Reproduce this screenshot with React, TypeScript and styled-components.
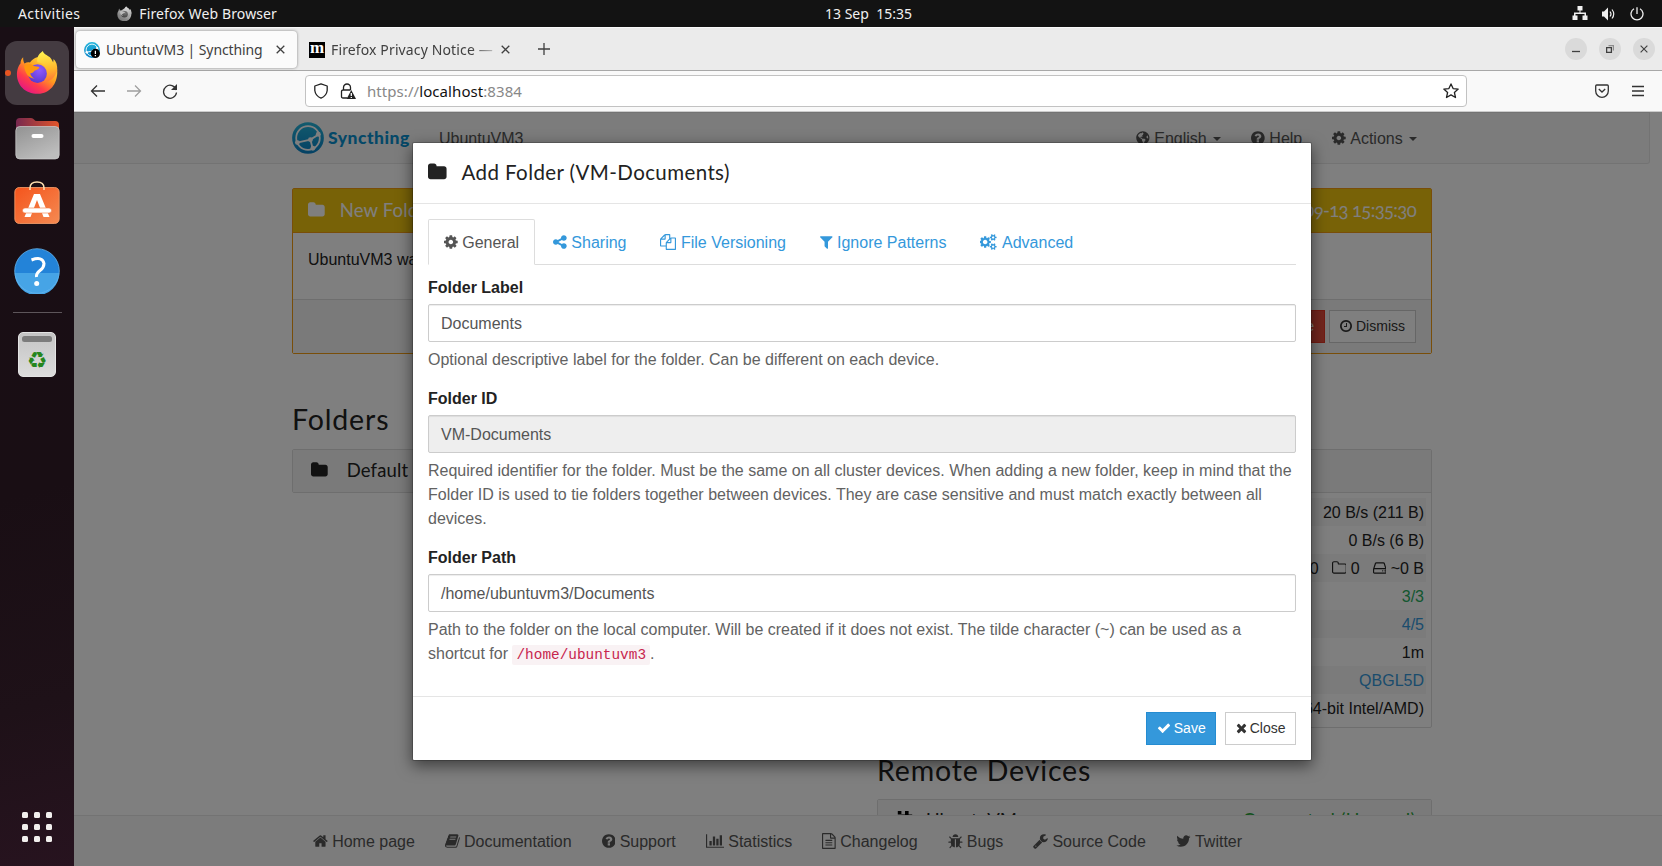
import React from "react";
import styled, { createGlobalStyle, css } from "styled-components";
import { FaGlobeAmericas } from "react-icons/fa";

const GlobalStyle = createGlobalStyle`
  * { box-sizing: border-box; }
  html, body { margin: 0; height: 866px; overflow: hidden; }
  body { font: 16px/24px "Liberation Sans", Arial, sans-serif; color: #222; }
`;

const ubuntu = `"Noto Sans", "Open Sans", sans-serif`;
const raleway = `Lato, "Open Sans", sans-serif`;

/* ---------- icon set ---------- */

type Glyph = { x: number; w: number; d: string };

const glyphs: Record<string, Glyph> = {
  cog: { x: 128, w: 1536, d: "M1152 896q0-106-75-181t-181-75-181 75-75 181 75 181 181 75 181-75 75-181zm512-109v222q0 12-8 23t-20 13l-185 28q-19 54-39 91 35 50 107 138 10 12 10 25t-9 23q-27 37-99 108t-94 71q-12 0-26-9l-138-108q-44 23-91 38-16 136-29 186-7 28-36 28h-222q-14 0-24.5-8.5t-11.5-21.5l-28-184q-49-16-90-37l-141 107q-10 9-25 9-14 0-25-11-126-114-165-168-7-10-7-23 0-12 8-23 15-21 51-66.5t54-70.5q-27-50-41-99l-183-27q-13-2-21-12.5t-8-23.5v-222q0-12 8-23t19-13l186-28q14-46 39-92-40-57-107-138-10-12-10-24 0-10 9-23 26-36 98.5-107.5t94.5-71.5q13 0 26 10l138 107q44-23 91-38 16-136 29-186 7-28 36-28h222q14 0 24.5 8.5t11.5 21.5l28 184q49 16 90 37l142-107q9-9 24-9 13 0 25 10 129 119 165 170 7 8 7 22 0 12-8 23-15 21-51 66.5t-54 70.5q26 50 41 98l183 28q13 2 21 12.5t8 23.5z" },
  share: { x: 128, w: 1536, d: "M1344 1024q133 0 226.5 93.5t93.5 226.5-93.5 226.5-226.5 93.5-226.5-93.5-93.5-226.5q0-12 2-34l-360-180q-92 86-218 86-133 0-226.5-93.5t-93.5-226.5 93.5-226.5 226.5-93.5q126 0 218 86l360-180q-2-22-2-34 0-133 93.5-226.5t226.5-93.5 226.5 93.5 93.5 226.5-93.5 226.5-226.5 93.5q-126 0-218-86l-360 180q2 22 2 34t-2 34l360 180q92-86 218-86z" },
  files: { x: 0, w: 1792, d: "M1696 384q40 0 68 28t28 68v1216q0 40-28 68t-68 28h-960q-40 0-68-28t-28-68v-288h-544q-40 0-68-28t-28-68v-672q0-40 20-88t48-76l408-408q28-28 76-48t88-20h416q40 0 68 28t28 68v328q68-40 128-40h416zm-544 213l-299 299h299v-299zm-640-384l-299 299h299v-299zm196 647l316-316v-416h-384v416q0 40-28 68t-68 28h-416v640h512v-256q0-40 20-88t48-76zm956 804v-1152h-384v416q0 40-28 68t-68 28h-416v640h896z" },
  filter: { x: 192, w: 1408, d: "M1595 295q17 41-14 70l-493 493v742q0 42-39 59-13 5-25 5-27 0-45-19l-256-256q-19-19-19-45v-486l-493-493q-31-29-14-70 17-39 59-39h1280q42 0 59 39z" },
  cogs: { x: 0, w: 1920, d: "M832 896q0-106-75-181t-181-75-181 75-75 181 75 181 181 75 181-75 75-181zm768 512q0-52-38-90t-90-38-90 38-38 90q0 53 37.5 90.5t90.5 37.5 90.5-37.5 37.5-90.5zm0-1024q0-52-38-90t-90-38-90 38-38 90q0 53 37.5 90.5t90.5 37.5 90.5-37.5 37.5-90.5zm-384 421v185q0 10-7 19.5t-16 10.5l-155 24q-11 35-32 76 34 48 90 115 7 11 7 20 0 12-7 19-23 30-82.5 89.5t-78.5 59.5q-11 0-21-7l-115-90q-37 19-77 31-11 108-23 155-7 24-30 24h-186q-11 0-20-7.5t-10-17.5l-23-153q-34-10-75-31l-118 89q-7 7-20 7-11 0-21-8-144-133-144-160 0-9 7-19 10-14 41-53t47-61q-23-44-35-82l-152-24q-10-1-17-9.5t-7-19.5v-185q0-10 7-19.5t16-10.5l155-24q11-35 32-76-34-48-90-115-7-11-7-20 0-12 7-20 22-30 82-89t79-59q11 0 21 7l115 90q34-18 77-32 11-108 23-154 7-24 30-24h186q11 0 20 7.5t10 17.5l23 153q34 10 75 31l118-89q8-7 20-7 11 0 21 8 144 133 144 160 0 8-7 19-12 16-42 54t-45 60q23 48 34 82l152 23q10 2 17 10.5t7 19.5zm640 533v140q0 16-149 31-12 27-30 52 51 113 51 138 0 4-4 7-122 71-124 71-8 0-46-47t-52-68q-20 2-30 2t-30-2q-14 21-52 68t-46 47q-2 0-124-71-4-3-4-7 0-25 51-138-18-25-30-52-149-15-149-31v-140q0-16 149-31 13-29 30-52-51-113-51-138 0-4 4-7 4-2 35-20t59-34 30-16q8 0 46 46.5t52 67.5q20-2 30-2t30 2q51-71 92-112l6-2q4 0 124 70 4 3 4 7 0 25-51 138 17 23 30 52 149 15 149 31zm0-1024v140q0 16-149 31-12 27-30 52 51 113 51 138 0 4-4 7-122 71-124 71-8 0-46-47t-52-68q-20 2-30 2t-30-2q-14 21-52 68t-46 47q-2 0-124-71-4-3-4-7 0-25 51-138-18-25-30-52-149-15-149-31v-140q0-16 149-31 13-29 30-52-51-113-51-138 0-4 4-7 4-2 35-20t59-34 30-16q8 0 46 46.5t52 67.5q20-2 30-2t30 2q51-71 92-112l6-2q4 0 124 70 4 3 4 7 0 25-51 138 17 23 30 52 149 15 149 31z" },
  folder: { x: 64, w: 1664, d: "M1728 608v704q0 92-66 158t-158 66h-1216q-92 0-158-66t-66-158v-960q0-92 66-158t158-66h320q92 0 158 66t66 158v32h672q92 0 158 66t66 158z" },
  folderO: { x: 0, w: 1664, d: "M1536 1312v-704q0-40-28-68t-68-28h-704q-40 0-68-28t-28-68v-64q0-40-28-68t-68-28h-320q-40 0-68 28t-28 68v960q0 40 28 68t68 28h1216q40 0 68-28t28-68zm128-704v704q0 92-66 158t-158 66h-1216q-92 0-158-66t-66-158v-960q0-92 66-158t158-66h320q92 0 158 66t66 158v32h672q92 0 158 66t66 158z" },
  help: { x: 128, w: 1536, d: "M1024 1376v-192q0-14-9-23t-23-9h-192q-14 0-23 9t-9 23v192q0 14 9 23t23 9h192q14 0 23-9t9-23zm256-672q0-88-55.5-163t-138.5-116-170-41q-243 0-371 213-15 24 8 42l132 100q7 6 19 6 16 0 25-12 53-68 86-92 34-24 86-24 48 0 85.5 26t37.5 59q0 38-20 61t-68 45q-63 28-115.5 86.5t-52.5 125.5v36q0 14 9 23t23 9h192q14 0 23-9t9-23q0-19 21.5-49.5t54.5-49.5q32-18 49-28.5t46-35 44.5-48 28-60.5 12.5-81zm384 192q0 209-103 385.5t-279.5 279.5-385.5 103-385.5-103-279.5-279.5-103-385.5 103-385.5 279.5-279.5 385.5-103 385.5 103 279.5 279.5 103 385.5z" },
  home: { x: 64, w: 1664, d: "M1472 992v480q0 26-19 45t-45 19h-384v-384h-256v384h-384q-26 0-45-19t-19-45v-480q0-1 .5-3t.5-3l575-474 575 474q1 2 1 6zm223-69l-62 74q-8 9-21 11h-3q-13 0-21-7l-692-577-692 577q-12 8-24 7-13-2-21-11l-62-74q-8-10-7-23.5t11-21.5l719-599q32-26 76-26t76 26l244 204v-195q0-14 9-23t23-9h192q14 0 23 9t9 23v408l219 182q10 8 11 21.5t-7 23.5z" },
  book: { x: 64, w: 1664, d: "M1703 478q40 57 18 129l-275 906q-19 64-76.5 107.5t-122.5 43.5h-923q-77 0-148.5-53.5t-99.5-131.5q-24-67-2-127 0-4 3-27t4-37q1-8-3-21.5t-3-19.5q2-11 8-21t16.5-23.5 16.5-23.5q23-38 45-91.5t30-91.5q3-10 .5-30t-.5-28q3-11 17-28t17-23q21-36 42-92t25-90q1-9-2.5-32t.5-28q4-13 22-30.5t22-22.5q19-26 42.5-84.5t27.5-96.5q1-8-3-25.5t-2-26.5q2-8 9-18t18-23 17-21q8-12 16.5-30.5t15-35 16-36 19.5-32 26.5-23.5 36-11.5 47.5 5.5l-1 3q38-9 51-9h761q74 0 114 56t18 130l-274 906q-36 119-71.5 153.5t-128.5 34.5h-869q-27 0-38 15-11 16-1 43 24 70 144 70h923q29 0 56-15.5t35-41.5l300-987q7-22 5-57 38 15 59 43zm-1064 2q-4 13 2 22.5t20 9.5h608q13 0 25.5-9.5t16.5-22.5l21-64q4-13-2-22.5t-20-9.5h-608q-13 0-25.5 9.5t-16.5 22.5zm-83 256q-4 13 2 22.5t20 9.5h608q13 0 25.5-9.5t16.5-22.5l21-64q4-13-2-22.5t-20-9.5h-608q-13 0-25.5 9.5t-16.5 22.5z" },
  chart: { x: 0, w: 2048, d: "M640 896v512h-256v-512h256zm384-512v1024h-256v-1024h256zm1024 1152v128h-2048v-1536h128v1408h1920zm-640-896v768h-256v-768h256zm384-384v1152h-256v-1152h256z" },
  fileText: { x: 128, w: 1536, d: "M1596 380q28 28 48 76t20 88v1152q0 40-28 68t-68 28h-1344q-40 0-68-28t-28-68v-1600q0-40 28-68t68-28h896q40 0 88 20t76 48zm-444-244v376h376q-10-29-22-41l-313-313q-12-12-41-22zm384 1528v-1024h-416q-40 0-68-28t-28-68v-416h-768v1536h1280zm-1024-864q0-14 9-23t23-9h704q14 0 23 9t9 23v64q0 14-9 23t-23 9h-704q-14 0-23-9t-9-23v-64zm736 224q14 0 23 9t9 23v64q0 14-9 23t-23 9h-704q-14 0-23-9t-9-23v-64q0-14 9-23t23-9h704zm0 256q14 0 23 9t9 23v64q0 14-9 23t-23 9h-704q-14 0-23-9t-9-23v-64q0-14 9-23t23-9h704z" },
  bug: { x: 0, w: 1664, d: "M1632 1024q0 26-19 45t-45 19h-224q0 171-67 290l208 209q19 19 19 45t-19 45q-18 19-45 19t-45-19l-198-197q-5 5-15 13t-42 28.5-65 36.5-82 29-97 13v-896h-128v896q-51 0-101.5-13.5t-87-33-66-39-43.5-32.5l-15-14-183 207q-20 21-48 21-24 0-43-16-19-18-20.5-44.5t15.5-46.5l202-227q-58-114-58-274h-224q-26 0-45-19t-19-45 19-45 45-19h224v-294l-173-173q-19-19-19-45t19-45 45-19 45 19l173 173h844l173-173q19-19 45-19t45 19 19 45-19 45l-173 173v294h224q26 0 45 19t19 45zm-480-576h-640q0-133 93.5-226.5t226.5-93.5 226.5 93.5 93.5 226.5z" },
  wrench: { x: 64, w: 1664, d: "M448 1472q0-26-19-45t-45-19-45 19-19 45 19 45 45 19 45-19 19-45zm644-420l-682 682q-37 37-90 37-52 0-91-37l-106-108q-38-36-38-90 0-53 38-91l681-681q39 98 114.5 173.5t173.5 114.5zm634-435q0 39-23 106-47 134-164.5 217.5t-258.5 83.5q-185 0-316.5-131.5t-131.5-316.5 131.5-316.5 316.5-131.5q58 0 121.5 16.5t107.5 46.5q16 11 16 28t-16 28l-293 169v224l193 107q5-3 79-48.5t135.5-81 70.5-35.5q15 0 23.5 10t8.5 25z" },
  twitter: { x: 64, w: 1664, d: "M1684 408q-67 98-162 167 1 14 1 42 0 130-38 259.5t-115.5 248.5-184.5 210.5-258 146-323 54.5q-271 0-496-145 35 4 78 4 225 0 401-138-105-2-188-64.5t-114-159.5q33 5 61 5 43 0 85-11-112-23-185.5-111.5t-73.5-205.5v-4q68 38 146 41-66-44-105-115t-39-154q0-88 44-163 121 149 294.5 238.5t371.5 99.5q-8-38-8-74 0-134 94.5-228.5t228.5-94.5q140 0 236 102 109-21 205-78-37 115-142 178 93-10 186-50z" },
  check: { x: 0, w: 1792, d: "M1671 566q0 40-28 68l-724 724-136 136q-28 28-68 28t-68-28l-136-136-362-362q-28-28-28-68t28-68l136-136q28-28 68-28t68 28l294 295 656-657q28-28 68-28t68 28l136 136q28 28 28 68z" },
  times: { x: 192, w: 1408, d: "M1490 1322q0 40-28 68l-136 136q-28 28-68 28t-68-28l-294-294-294 294q-28 28-68 28t-68-28l-136-136q-28-28-28-68t28-68l294-294-294-294q-28-28-28-68t28-68l136-136q28-28 68-28t68 28l294 294 294-294q28-28 68-28t68 28l136 136q28 28 28 68t-28 68l-294 294 294 294q28 28 28 68z" },
  clock: { x: 128, w: 1536, d: "M1024 544v448q0 14-9 23t-23 9h-320q-14 0-23-9t-9-23v-64q0-14 9-23t23-9h224v-352q0-14 9-23t23-9h64q14 0 23 9t9 23zm416 352q0-148-73-273t-198-198-273-73-273 73-198 198-73 273 73 273 198 198 273 73 273-73 198-198 73-273zm224 0q0 209-103 385.5t-279.5 279.5-385.5 103-385.5-103-279.5-279.5-103-385.5 103-385.5 279.5-279.5 385.5-103 385.5 103 279.5 279.5 103 385.5z" },
  hdd: { x: 0, w: 1536, d: "M1168 1216a80 80 0 1 1-160 0a80 80 0 0 1 160 0zm256 0a80 80 0 1 1-160 0a80 80 0 0 1 160 0zM128 1056v320q0 32 32 32h1216q32 0 32-32v-320q0-32-32-32h-1216q-32 0-32 32zM178 896h1180l-157-482q-8-30-40-30h-786q-32 0-40 30zM1536 1056v320q0 66-47 113t-113 47h-1216q-66 0-113-47t-47-113v-320q0-42 22-102l197-606q21-62 62-77t94-15h786q52 0 100 35t64 84l197 606q14 53 14 95z" },
};

const Svg = styled.svg`
  display: block;
  flex: none;
  fill: currentColor;
`;

function Icon({ name, size = 16 }: { name: string; size?: number }) {
  const g = glyphs[name];
  return (
    <Svg
      width={(g.w / 1792) * size}
      height={size}
      viewBox={`${g.x} 0 ${g.w} 1792`}
      fillRule={name === "hdd" ? "evenodd" : "nonzero"}
    >
      <path d={g.d} />
    </Svg>
  );
}

const Line = styled.svg`
  display: block;
  flex: none;
  fill: none;
  stroke: currentColor;
  stroke-width: 1.3;
`;

/* ---------- desktop shell ---------- */

const Desktop = styled.div`
  width: 1662px;
  height: 866px;
  display: flex;
  flex-direction: column;
  overflow: hidden;
`;

const TopBar = styled.header`
  height: 27px;
  flex: none;
  display: grid;
  grid-template-columns: 1fr auto 1fr;
  align-items: center;
  padding: 0 18px;
  background: #131313;
  color: #f0f0f0;
  font: 14px/27px ${ubuntu};
`;

const BarGroup = styled.div<{ $end?: boolean }>`
  display: flex;
  align-items: center;
  justify-content: ${(p) => (p.$end ? "flex-end" : "flex-start")};
  gap: ${(p) => (p.$end ? "13px" : "7px")};
`;

const BarText = styled.span<{ $gap?: number; $track?: number }>`
  margin-right: ${(p) => p.$gap ?? 0}px;
  letter-spacing: ${(p) => p.$track ?? 0}px;
  white-space: pre;
`;

/* The clock is centred over the area to the right of the dock. */
const Clock = styled(BarText)`
  margin-left: 75px;
`;

const Workspace = styled.div`
  flex: 1;
  display: flex;
  min-height: 0;
`;

const Dock = styled.nav`
  width: 74px;
  flex: none;
  display: flex;
  flex-direction: column;
  align-items: center;
  padding: 14px 0 24px;
  background: linear-gradient(165deg, #190e15 0%, #190e14 55%, #1e1118 80%, #27131f 100%);
`;

const DockTile = styled.div<{ $active?: boolean; $h?: number; $mt?: number }>`
  position: relative;
  width: 64px;
  height: ${(p) => p.$h ?? 64}px;
  margin-top: ${(p) => p.$mt ?? 0}px;
  padding-bottom: ${(p) => (p.$active ? 2 : 0)}px;
  display: flex;
  align-items: center;
  justify-content: center;
  border-radius: 12px;
  background: ${(p) => (p.$active ? "#443b41" : "transparent")};
`;

const RunningDot = styled.i`
  position: absolute;
  left: 0;
  top: 29px;
  width: 6px;
  height: 6px;
  border-radius: 50%;
  background: #e95420;
`;

const DockRule = styled.hr`
  width: 49px;
  height: 1px;
  margin: 18px 0 0;
  border: 0;
  background: #5d555a;
`;

const AppGrid = styled.div`
  margin-top: auto;
  display: grid;
  grid-template-columns: repeat(3, 6px);
  gap: 6px;
`;

const AppDot = styled.i`
  width: 6px;
  height: 6px;
  border-radius: 1.5px;
  background: #f2f0ee;
`;

/* ---------- browser ---------- */

const Browser = styled.main`
  flex: 1;
  min-width: 0;
  display: flex;
  flex-direction: column;
  font-family: ${ubuntu};
`;

const TabStrip = styled.div`
  height: 44px;
  flex: none;
  display: flex;
  align-items: center;
  padding: 0 7px 0 2px;
  background: #ebebeb;
  border-bottom: 1px solid #a8a8a8;
  border-top: 1px solid #f8f8f8;
  color: #404040;
`;

const Tab = styled.div<{ $active?: boolean }>`
  width: ${(p) => (p.$active ? 221 : 225)}px;
  height: 37px;
  margin-top: 1px;
  display: flex;
  align-items: center;
  padding: 0 12px 0 ${(p) => (p.$active ? 8 : 12)}px;
  border-radius: 4px;
  font-size: 14px;
  white-space: nowrap;
  ${(p) =>
    p.$active &&
    css`
      background: #fbfbfb;
      box-shadow: 0 0 3px rgba(0, 0, 0, 0.45);
    `}
`;

const TabTitle = styled.span<{ $track: number; $fade?: boolean }>`
  flex: 1;
  margin-left: 6px;
  overflow: hidden;
  letter-spacing: ${(p) => p.$track}px;
  ${(p) =>
    p.$fade &&
    css`
      mask-image: linear-gradient(90deg, #000 82%, transparent 101%);
    `}
`;

const NewTab = styled.div`
  margin-left: 16px;
`;

const WindowButtons = styled.div`
  margin-left: auto;
  display: flex;
  gap: 12px;
`;

const WindowButton = styled.div`
  width: 22px;
  height: 22px;
  border-radius: 50%;
  display: flex;
  align-items: center;
  justify-content: center;
  background: #dadada;
`;

const Toolbar = styled.div`
  height: 41px;
  flex: none;
  display: flex;
  align-items: center;
  padding: 0 16px;
  background: #f9f9f9;
  border-bottom: 1px solid #ccc;
  color: #333;
`;

const NavButtons = styled.div`
  width: 215px;
  display: flex;
  gap: 20px;
`;

const AddressBar = styled.div`
  width: 1162px;
  height: 32px;
  display: flex;
  align-items: center;
  gap: 11px;
  padding: 0 7px 0 7px;
  border: 1px solid #c2c2c2;
  border-radius: 4px;
  background: #fff;
  font-size: 15px;
  color: #888;
`;

const AddressText = styled.span`
  flex: 1;
  letter-spacing: 0.07px;

  b {
    font-weight: 400;
    color: #111;
  }
`;

const ToolbarEnd = styled.div`
  margin-left: auto;
  display: flex;
  gap: 20px;
`;

/* ---------- page ---------- */

const Viewport = styled.div`
  position: relative;
  flex: 1;
  min-height: 0;
  display: flex;
  flex-direction: column;
  overflow: hidden;
  background: #fff;
  font-family: "Liberation Sans", Arial, sans-serif;
`;

const Navbar = styled.div`
  width: 1576px;
  height: 52px;
  flex: none;
  display: flex;
  align-items: center;
  padding: 1px 232px 0 218px;
  background: #f8f8f8;
  border: 1px solid #e7e7e7;
  border-left: 0;
  border-radius: 0 0 3px 0;
  color: #555;
`;

const Brand = styled.div`
  display: flex;
  align-items: center;
  gap: 4px;
  width: 147px;
  padding-bottom: 2px;
  font: 900 17.5px/24px ${raleway};
  letter-spacing: 0.5px;
  color: #0891d1;
`;

const NavLinks = styled.div`
  margin-left: auto;
  display: flex;
  gap: 30px;
`;

const IconText = styled.span<{ $gap?: number; $color?: string }>`
  height: 24px;
  display: inline-flex;
  align-items: center;
  gap: ${(p) => p.$gap ?? 4.3}px;
  white-space: nowrap;
  color: ${(p) => p.$color ?? "inherit"};

  svg {
    margin-bottom: 2px;
  }
`;

const Caret = styled.i`
  margin-left: 2px;
  border-top: 4px solid;
  border-left: 4px solid transparent;
  border-right: 4px solid transparent;
`;

const Content = styled.div`
  flex: 1;
  min-height: 0;
  overflow: hidden;
  width: 1576px;
  padding: 24px 218px 0;
`;

const Panel = styled.section<{ $warning?: boolean }>`
  border: 1px solid ${(p) => (p.$warning ? "#f39c12" : "#ddd")};
  border-radius: 2px;
  background: #fff;
`;

const PanelHeading = styled.div<{ $warning?: boolean; $plain?: boolean; $gap?: number }>`
  height: ${(p) => (p.$warning ? 44 : p.$plain ? 42 : 43)}px;
  display: flex;
  align-items: center;
  gap: ${(p) => p.$gap ?? (p.$warning ? 15 : 19)}px;
  padding: 0 15px 2px ${(p) => (p.$warning ? 15 : 18)}px;
  background: ${(p) => (p.$warning ? "#f1c40f" : "#f5f5f5")};
  border-bottom: ${(p) => (p.$plain ? 0 : 1)}px solid ${(p) => (p.$warning ? "#f39c12" : "#ddd")};
  color: ${(p) => (p.$warning ? "#fff" : "#222")};
  font: 18.5px/24px ${raleway};
  font-feature-settings: "onum";
  letter-spacing: 0.15px;
`;

const HeadingEnd = styled.span<{ $color?: string; $track: number }>`
  margin-left: auto;
  color: ${(p) => p.$color ?? "inherit"};
  letter-spacing: ${(p) => p.$track}px;
`;

const NoticeBody = styled.p`
  height: 66px;
  margin: 0;
  padding: 15px 15px 0;
`;

const NoticeFooter = styled.div`
  height: 54px;
  display: flex;
  align-items: center;
  justify-content: flex-end;
  gap: 4px;
  padding: 0 15px;
  background: #f5f5f5;
  border-top: 1px solid #ddd;
`;

const Button = styled.button<{ $kind?: "primary" | "danger"; $tight?: boolean }>`
  height: 33px;
  display: inline-flex;
  align-items: center;
  gap: ${(p) => (p.$tight ? 3 : 4)}px;
  padding: 0 ${(p) => (p.$tight ? 9.5 : 10)}px;
  border: 1px solid #ccc;
  background: #fff;
  color: #333;
  font: 14px/21px "Liberation Sans", Arial, sans-serif;

  svg {
    margin-bottom: 1px;
  }
  ${(p) =>
    p.$kind === "primary" &&
    css`
      border-color: #258cd1;
      background: #3498db;
      color: #fff;
    `}
  ${(p) =>
    p.$kind === "danger" &&
    css`
      border-color: #e43725;
      background: #e74c3c;
      color: #fff;
    `}
`;

const Columns = styled.div`
  display: grid;
  grid-template-columns: 555px 555px;
  gap: 30px;
  margin-top: 48px;
`;

const Heading = styled.h3<{ $height?: number }>`
  margin: 0;
  height: ${(p) => p.$height ?? 47}px;
  font: 400 28.5px/34px ${raleway};
  letter-spacing: 0.85px;
`;

const Stats = styled.div`
  padding: 5px;
`;

const StatRow = styled.div<{ $color?: string }>`
  height: 28px;
  display: flex;
  align-items: center;
  justify-content: flex-end;
  gap: 13px;
  padding: 2px 2px 0;
  color: ${(p) => p.$color ?? "#222"};
  &:nth-child(odd) {
    background: #f6f6f6;
  }
`;

const RemoteDevices = styled.div`
  margin-top: 25px;
`;

const Identicon = styled.svg`
  width: 18px;
  height: 18px;
  flex: none;
`;

const PageFooter = styled.footer`
  height: 51px;
  flex: none;
  display: flex;
  gap: 30px;
  padding: 14px 239px 0;
  background: #f8f8f8;
  border-top: 1px solid #e7e7e7;
  color: #555;
`;

const Backdrop = styled.div`
  position: absolute;
  inset: 0;
  background: rgba(0, 0, 0, 0.5);
`;

/* ---------- dialog ---------- */

const Dialog = styled.section`
  position: absolute;
  left: 338px;
  top: 30px;
  width: 900px;
  height: 619px;
  border: 1px solid rgba(0, 0, 0, 0.2);
  border-radius: 2px;
  background: #fff;
  background-clip: padding-box;
  box-shadow: 0 5px 15px rgba(0, 0, 0, 0.5);
`;

const DialogHeader = styled.header`
  height: 61px;
  display: flex;
  align-items: center;
  gap: 15px;
  padding: 0 15px 2px;
  border-bottom: 1px solid #e5e5e5;
  font: 20.5px/30px ${raleway};
  letter-spacing: 0.4px;
`;

const DialogBody = styled.div`
  height: 492px;
  padding: 15px 15px 0;
`;

const Tabs = styled.div`
  height: 46px;
  display: flex;
  gap: 2px;
  border-bottom: 1px solid #ddd;
`;

const TabLink = styled.div<{ $active?: boolean }>`
  height: 46px;
  padding: 11px 15px 9px;
  border: 1px solid transparent;
  color: #3498db;
  ${(p) =>
    p.$active &&
    css`
      border-color: #ddd #ddd transparent;
      border-radius: 2px 2px 0 0;
      background: #fff;
      color: #555;
    `}
`;

const Field = styled.div`
  padding-top: 11px;
  & + & {
    padding-top: 15px;
  }
`;

const Label = styled.label`
  display: block;
  margin-bottom: 4px;
  font-weight: 700;
`;

const Input = styled.div<{ $disabled?: boolean }>`
  height: 38px;
  padding: 7px 12px 5px;
  border: 1px solid #ccc;
  border-radius: 2px;
  background: ${(p) => (p.$disabled ? "#eee" : "#fff")};
  box-shadow: inset 0 1px 1px rgba(0, 0, 0, 0.075);
  color: #555;
`;

const HelpText = styled.p`
  margin: 6px 0 0;
  color: #626262;
`;

const Code = styled.code`
  padding: 2px 4px;
  border-radius: 2px;
  background: #f9f2f4;
  color: #c7254e;
  font: 14.4px "Liberation Mono", monospace;
`;

const DialogFooter = styled.footer`
  height: 64px;
  display: flex;
  align-items: center;
  justify-content: flex-end;
  gap: 9px;
  padding: 0 15px;
  border-top: 1px solid #e5e5e5;
`;

/* ---------- drawings ---------- */

function FirefoxLogo({ size, mono }: { size: number; mono?: boolean }) {
  const id = mono ? "m" : "c";
  return (
    <svg width={size} height={size * 1.04} viewBox="0 0 48 50">
      <defs>
        <linearGradient id={`${id}a`} x1="0.85" y1="0.1" x2="0.2" y2="0.95">
          <stop offset="0" stopColor={mono ? "#ddd" : "#ffe141"} />
          <stop offset="0.4" stopColor={mono ? "#aaa" : "#ff9a1f"} />
          <stop offset="0.7" stopColor={mono ? "#888" : "#ff3b4b"} />
          <stop offset="1" stopColor={mono ? "#777" : "#e31587"} />
        </linearGradient>
        <radialGradient id={`${id}b`} cx="0.6" cy="0.3" r="0.7">
          <stop offset="0" stopColor={mono ? "#777" : "#9059ff"} />
          <stop offset="1" stopColor={mono ? "#444" : "#5b3ad0"} />
        </radialGradient>
        <linearGradient id={`${id}c`} x1="0.5" y1="0" x2="0.6" y2="1">
          <stop offset="0" stopColor={mono ? "#ddd" : "#fff44f"} />
          <stop offset="0.6" stopColor={mono ? "#bbb" : "#ffb52c"} />
          <stop offset="1" stopColor={mono ? "#999" : "#ff7139"} />
        </linearGradient>
      </defs>
      <path fill={`url(#${id}a)`} d="M8 8c-.2 3 .3 5 1.500 7 2-1.200 4-1.500 6-1 2-3 5-5 8-6 3 0 10 1 14 6 2 1 5 3 6 7l2-2c3 14-5 30-21 30C10 49 1 39 1 27c0-5 2-10 4-12 0-3 1-5 3-7z" />
      <path fill={`url(#${id}c)`} d="M30 1c-6 4-7 9-6 13 4 0 9 3 11 8 1 6-1 11-5 14 8 0 14-5 16-13 .5-6-1-10-4-13l-.5 4c-2-5-4-6-7-8-3-2-4-3-4.500-5z" />
      <circle cx="24" cy="26.500" r="10.500" fill={`url(#${id}b)`} />
      <path fill={mono ? "#bbb" : "#ff980e"} d="M9 18c4-3 8-3 11 0l6 1c0 2-2 3-5 4-1 1-2 3-5 3 0 2 2 5 5 6-7 0-11-6-12-14z" />
    </svg>
  );
}

function SyncthingLogo({ size, id, alert }: { size: number; id: string; alert?: boolean }) {
  return (
    <Svg width={size} height={size} viewBox="0 0 118 118">
      <defs>
        <linearGradient id={id} x1="0" y1="1" x2="0" y2="0">
          <stop offset="0" stopColor="#0882c8" />
          <stop offset="1" stopColor="#26b6db" />
        </linearGradient>
      </defs>
      <circle cx="59" cy="59" r="58.500" fill={`url(#${id})`} />
      <g fill="none" stroke="#fff" strokeWidth="6.500">
        <circle cx="59" cy="59" r="43.500" />
        <path d="M68 65L98 46M68 65L76 98M68 65L19 76" strokeWidth="7" />
      </g>
      <g fill="#fff">
        <circle cx="68" cy="65" r="9" />
        <circle cx="97" cy="45" r="9" />
        <circle cx="77" cy="97" r="9" />
        <circle cx="20" cy="76" r="9" />
      </g>
      {alert && (
        <g>
          <circle cx="84" cy="84" r="34" fill="#000" />
          <path d="M84 64v24M84 96v9" stroke="#fff" strokeWidth="9" />
        </g>
      )}
    </Svg>
  );
}

function Cross({ size = 9 }: { size?: number }) {
  return (
    <Line width={size} height={size} viewBox="0 0 9 9">
      <path d="M.7.7l7.600 7.600M8.300.7L.7 8.300" />
    </Line>
  );
}

function FilesLogo() {
  return (
    <svg width="45" height="42" viewBox="0 0 45 42">
      <defs>
        <linearGradient id="fb" x1="0" x2="1"><stop offset="0" stopColor="#77284f" /><stop offset="1" stopColor="#e2552a" /></linearGradient>
        <linearGradient id="ff" x1="0" x2="0.6" y2="1"><stop offset="0" stopColor="#929292" /><stop offset="1" stopColor="#bdbdbd" /></linearGradient>
      </defs>
      <path fill="url(#fb)" d="M1 4q0-4 4-4h11q2 0 3 1.500T22 3h18q4 0 4 4v12H1z" />
      <rect x=".8" y="8.500" width="43.400" height="32.500" rx="4" fill="url(#ff)" stroke="#cfcfcf" strokeWidth=".7" />
      <rect x="16.500" y="16" width="12" height="4" rx="2" fill="#fff" />
    </svg>
  );
}

function SoftwareLogo() {
  return (
    <svg width="46" height="43" viewBox="0 0 46 43">
      <defs><linearGradient id="sw" x1="0" x2="1" y2="1"><stop offset="0" stopColor="#f4541c" /><stop offset="1" stopColor="#f58a52" /></linearGradient></defs>
      <rect x=".8" y="6.500" width="44.400" height="36" rx="4.500" fill="url(#sw)" stroke="#f9a06c" strokeWidth=".8" />
      <path d="M16 9V7q0-6 7-6t7 6v2" fill="none" stroke="#ffe0b0" strokeWidth="1.500" />
      <path d="M20 13h6l9.500 23h-6L23 19l-6.500 17h-6z" fill="#fff" />
      <rect x="8.500" y="27" width="29" height="5" rx="2.500" fill="#fff" stroke="#f2753e" strokeWidth=".6" />
    </svg>
  );
}

function HelpLogo() {
  return (
    <svg width="46" height="46" viewBox="0 0 46 46">
      <circle cx="23" cy="23" r="22.300" fill="#2383d8" />
      <path d="M.7 25h44.600a22.300 22.300 0 0 1-44.600 0z" fill="#46a4e6" />
      <circle cx="23" cy="23" r="22.300" fill="none" stroke="#63b4ee" strokeWidth=".8" />
      <path d="M17.500 12q11-4 12.500 3.500 0 4-4 7t-3.500 6.500" fill="none" stroke="#fff" strokeWidth="3" />
      <circle cx="22.700" cy="35.500" r="2.500" fill="#fff" />
    </svg>
  );
}

const RecycleMark = styled.span`
  font: 23px/22px "DejaVu Sans", sans-serif;
  color: #25861d;
`;

const TrashBody = styled.div`
  width: 38px;
  height: 45px;
  display: flex;
  flex-direction: column;
  align-items: center;
  gap: 7px;
  padding-top: 3px;
  border-radius: 5px;
  background: linear-gradient(#c4c4c4, #dcdcdc);
  border: 1px solid #e3e3e3;
`;

const TrashLid = styled.i`
  width: 30px;
  height: 6px;
  flex: none;
  border-radius: 2.5px;
  background: #7c7c7c;
`;

const MozillaMark = styled.span`
  width: 16px;
  height: 16px;
  flex: none;
  background: #000;
  color: #fff;
  text-align: center;
  font: 700 17px/11px "Liberation Serif", serif;
`;

function GnomeBar() {
  return (
    <TopBar>
      <BarGroup>
        <BarText $gap={30} $track={0.4}>Activities</BarText>
        <FirefoxLogo size={15} mono />
        <BarText $track={0.12}>Firefox Web Browser</BarText>
      </BarGroup>
      <Clock>{"13 Sep  15:35"}</Clock>
      <BarGroup $end>
        <Svg width="16" height="15" viewBox="0 0 16 15">
          <path d="M5.500 0h5v4.500h-2v2h5.500v3h1.500V14h-5V9.500h2v-1.500h-9v1.500h2V14H.5V9.500H2v-3h5.500v-2h-2z" />
        </Svg>
        <Svg width="16" height="14" viewBox="0 0 16 14">
          <path d="M1 4.500h2L7 .5v13l-4-4H1z" />
          <path d="M9 4.500q2 2.500 0 5M11 2.500q3.500 4.500 0 9" fill="none" stroke="currentColor" strokeWidth="1.200" />
        </Svg>
        <Line width="14" height="14" viewBox="0 0 14 14">
          <path d="M4 1.700a6 6 0 1 0 6 0M7 .3v6.700" />
        </Line>
      </BarGroup>
    </TopBar>
  );
}

function SideDock() {
  return (
    <Dock>
      <DockTile $active>
        <RunningDot />
        <FirefoxLogo size={43} />
      </DockTile>
      <DockTile $h={42} $mt={13}><FilesLogo /></DockTile>
      <DockTile $h={43} $mt={21}><SoftwareLogo /></DockTile>
      <DockTile $h={46} $mt={24}><HelpLogo /></DockTile>
      <DockRule />
      <DockTile $h={45} $mt={19}>
        <TrashBody><TrashLid /><RecycleMark>♻</RecycleMark></TrashBody>
      </DockTile>
      <AppGrid>{Array.from({ length: 9 }, (_, i) => <AppDot key={i} />)}</AppGrid>
    </Dock>
  );
}

function BrowserTabs() {
  return (
    <TabStrip>
      <Tab $active>
        <SyncthingLogo size={16} id="fav" alert />
        <TabTitle $track={-0.1}>UbuntuVM3 | Syncthing</TabTitle>
        <Cross />
      </Tab>
      <Tab>
        <MozillaMark>m</MozillaMark>
        <TabTitle $track={0.13} $fade>Firefox Privacy Notice —</TabTitle>
        <Cross />
      </Tab>
      <NewTab>
        <Line width="12" height="12" viewBox="0 0 12 12"><path d="M6 0v12M0 6h12" /></Line>
      </NewTab>
      <WindowButtons>
        <WindowButton><Line width="8" height="8" viewBox="0 0 8 8"><path d="M0 6.500h8" /></Line></WindowButton>
        <WindowButton>
          <Line width="8" height="8" viewBox="0 0 8 8">
            <path d="M.6 2.600h4.800v4.800H.6z" /><path d="M2.500.5h5v5" opacity=".5" />
          </Line>
        </WindowButton>
        <WindowButton><Cross size={8} /></WindowButton>
      </WindowButtons>
    </TabStrip>
  );
}

function BrowserToolbar() {
  return (
    <Toolbar>
      <NavButtons>
        <Line width="16" height="16" viewBox="0 0 16 16"><path d="M15 8H1.500M7 2.500L1.500 8 7 13.500" /></Line>
        <Line width="16" height="16" viewBox="0 0 16 16" opacity=".45"><path d="M1 8h13.500M9 2.500L14.500 8 9 13.500" /></Line>
        <Line width="16" height="16" viewBox="0 0 16 16">
          <path d="M14.300 7a6.500 6.500 0 1 0 .2 2.500" /><path d="M15 1v6H9z" fill="currentColor" stroke="none" />
        </Line>
      </NavButtons>
      <AddressBar>
        <Line width="16" height="16" viewBox="0 0 16 16" color="#222">
          <path d="M8 .8l6.200 2.200v4.500Q13.500 13 8 15.200 2.500 13 1.800 7.500V3z" strokeLinejoin="round" />
        </Line>
        <Line width="16" height="16" viewBox="0 0 16 16" color="#222">
          <path d="M3.500 7V4.500a3.500 3.500 0 0 1 7 0V7M7.500 15H3q-1.500 0-1.500-1.500V8.500Q1.500 7 3 7h7.500" />
          <path d="M11.300 7l4.700 9H6.600z" fill="currentColor" stroke="none" />
          <path d="M11.300 10v3M11.300 14v1" stroke="#fff" />
        </Line>
        <AddressText>https://<b>localhost</b>:8384</AddressText>
        <Line width="16" height="16" viewBox="0 0 16 16" color="#222">
          <path d="M8 .9l2.100 4.700 5.100.5-3.800 3.400 1.100 5L8 11.900l-4.500 2.600 1.100-5L.8 6.100l5.100-.5z" strokeLinejoin="round" />
        </Line>
      </AddressBar>
      <ToolbarEnd>
        <Line width="16" height="16" viewBox="0 0 16 16">
          <path d="M1.700 3q0-1 1-1h10.600q1 0 1 1v5a6.300 6.300 0 0 1-12.600 0z" /><path d="M4.800 6L8 9l3.200-3" />
        </Line>
        <Line width="16" height="16" viewBox="0 0 16 16"><path d="M2 3.500h12M2 8h12M2 12.500h12" /></Line>
      </ToolbarEnd>
    </Toolbar>
  );
}

const footerLinks = [
  ["home", "Home page"],
  ["book", "Documentation"],
  ["help", "Support"],
  ["chart", "Statistics"],
  ["fileText", "Changelog"],
  ["bug", "Bugs"],
  ["wrench", "Source Code"],
  ["twitter", "Twitter"],
];

function Dashboard() {
  return (
    <>
      <Navbar>
        <Brand><SyncthingLogo size={32} id="brand" />Syncthing</Brand>
        <span>UbuntuVM3</span>
        <NavLinks>
          <IconText $gap={4.6}><FaGlobeAmericas size={13.7} />English<Caret /></IconText>
          <IconText><Icon name="help" />Help</IconText>
          <IconText><Icon name="cog" />Actions<Caret /></IconText>
        </NavLinks>
      </Navbar>
      <Content>
        <Panel $warning>
          <PanelHeading $warning>
            <Icon name="folder" size={18} />New Folder<HeadingEnd $track={-0.65}>2022-09-13 15:35:30</HeadingEnd>
          </PanelHeading>
          <NoticeBody>UbuntuVM3 wants to share folder "Documents" (VM-Documents). Add new folder?</NoticeBody>
          <NoticeFooter>
            <Button $kind="danger">Ignore</Button>
            <Button><Icon name="clock" size={14} />Dismiss</Button>
          </NoticeFooter>
        </Panel>
        <Columns>
          <div>
            <Heading>Folders</Heading>
            <Panel><PanelHeading $plain><Icon name="folder" size={18} />Default Folder</PanelHeading></Panel>
          </div>
          <div>
            <Heading>This Device</Heading>
            <Panel>
              <PanelHeading>UbuntuVM3</PanelHeading>
              <Stats>
                <StatRow>20 B/s (211 B)</StatRow>
                <StatRow>0 B/s (6 B)</StatRow>
                <StatRow>
                  <span>0</span>
                  <IconText><Icon name="folderO" />0</IconText>
                  <IconText><Icon name="hdd" />~0 B</IconText>
                </StatRow>
                <StatRow $color="#27ae60">3/3</StatRow>
                <StatRow $color="#3498db">4/5</StatRow>
                <StatRow>1m</StatRow>
                <StatRow $color="#3498db">QBGL5D</StatRow>
                <StatRow>v1.21.0, Linux (64-bit Intel/AMD)</StatRow>
              </Stats>
            </Panel>
            <RemoteDevices>
              <Heading $height={46}>Remote Devices</Heading>
              <Panel>
                <PanelHeading $plain $gap={12}>
                  <Identicon viewBox="0 0 5 5"><path d="M0 0h1v1H0zM2 0h1v1H2zM1 1h3v1H1zM0 3h5v1H0z" transform="translate(.5 0)" /></Identicon>
                  UbuntuVM1
                  <HeadingEnd $color="#29a33a" $track={0.45}>Connected (Unused)</HeadingEnd>
                </PanelHeading>
              </Panel>
            </RemoteDevices>
          </div>
        </Columns>
      </Content>
      <PageFooter>
        {footerLinks.map(([icon, text]) => (
          <IconText key={text}><Icon name={icon} />{text}</IconText>
        ))}
      </PageFooter>
    </>
  );
}

const dialogTabs = [
  ["cog", "General"],
  ["share", "Sharing"],
  ["files", "File Versioning"],
  ["filter", "Ignore Patterns"],
  ["cogs", "Advanced"],
];

function AddFolderDialog() {
  return (
    <Dialog>
      <DialogHeader><Icon name="folder" size={20} />Add Folder (VM-Documents)</DialogHeader>
      <DialogBody>
        <Tabs>
          {dialogTabs.map(([icon, text], i) => (
            <TabLink key={text} $active={i === 0}><IconText $gap={4.5}><Icon name={icon} />{text}</IconText></TabLink>
          ))}
        </Tabs>
        <Field>
          <Label>Folder Label</Label>
          <Input>Documents</Input>
          <HelpText>Optional descriptive label for the folder. Can be different on each device.</HelpText>
        </Field>
        <Field>
          <Label>Folder ID</Label>
          <Input $disabled>VM-Documents</Input>
          <HelpText>
            Required identifier for the folder. Must be the same on all cluster devices. When adding a new folder, keep in
            mind that the Folder ID is used to tie folders together between devices. They are case sensitive and must match
            exactly between all devices.
          </HelpText>
        </Field>
        <Field>
          <Label>Folder Path</Label>
          <Input>/home/ubuntuvm3/Documents</Input>
          <HelpText>
            Path to the folder on the local computer. Will be created if it does not exist. The tilde character (~) can be
            used as a shortcut for <Code>/home/ubuntuvm3</Code>.
          </HelpText>
        </Field>
      </DialogBody>
      <DialogFooter>
        <Button $kind="primary" $tight><Icon name="check" size={14} />Save</Button>
        <Button $tight><Icon name="times" size={14} />Close</Button>
      </DialogFooter>
    </Dialog>
  );
}

export default function App() {
  return (
    <Desktop>
      <GlobalStyle />
      <GnomeBar />
      <Workspace>
        <SideDock />
        <Browser>
          <BrowserTabs />
          <BrowserToolbar />
          <Viewport>
            <Dashboard />
            <Backdrop />
            <AddFolderDialog />
          </Viewport>
        </Browser>
      </Workspace>
    </Desktop>
  );
}
